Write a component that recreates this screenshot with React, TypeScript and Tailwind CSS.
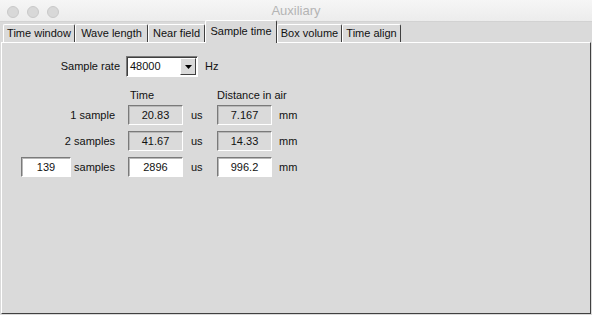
import React from "react";

const tabs = [
  { label: "Time window", w: "w-[72px]" },
  { label: "Wave length", w: "w-[73px]" },
  { label: "Near field", w: "w-[57px]" },
  { label: "Sample time", w: "w-[72px]", active: true },
  { label: "Box volume", w: "w-[65px]" },
  { label: "Time align", w: "w-[59px]" },
];

function Field({ value, editable }: { value: string; editable?: boolean }) {
  return (
    <div
      className={`flex h-[20px] items-center justify-center border border-t-[#7a7a7a] border-l-[#7a7a7a] border-r-white border-b-white shadow-[inset_1px_1px_0_#b8b8b8] ${
        editable ? "bg-white" : "bg-[#dadada]"
      }`}
    >
      {value}
    </div>
  );
}

function Row({
  label,
  time,
  dist,
  count,
}: {
  label: string;
  time: string;
  dist: string;
  count?: string;
}) {
  const editable = !!count;
  return (
    <div className="flex h-[20px] items-center">
      {count ? (
        <>
          <div className="ml-[19px] w-[50px]">
            <Field value={count} editable />
          </div>
          <div className="w-[44px] text-right">{label}</div>
        </>
      ) : (
        <div className="w-[113px] text-right">{label}</div>
      )}
      <div className="ml-[13px] w-[55px]">
        <Field value={time} editable={editable} />
      </div>
      <div className="w-[34px] pl-[8px]">us</div>
      <div className="w-[55px]">
        <Field value={dist} editable={editable} />
      </div>
      <div className="pl-[7px]">mm</div>
    </div>
  );
}

export default function App() {
  return (
    <div className="flex h-[315px] w-[592px] flex-col bg-[#dadada] font-['Liberation_Sans',Arial,sans-serif] text-[11px] text-[#111]">
      {/* title bar */}
      <div className="relative flex h-[22px] items-center justify-center border-b border-[#d2d2d2] bg-gradient-to-b from-[#f6f6f6] to-[#ececec]">
        <div className="absolute left-[7px] top-[6px] flex gap-[8px]">
          <span className="h-[12px] w-[12px] rounded-full border border-[#c9c9c9] bg-[#d8d8d8]" />
          <span className="h-[12px] w-[12px] rounded-full border border-[#c9c9c9] bg-[#d8d8d8]" />
          <span className="h-[12px] w-[12px] rounded-full border border-[#c9c9c9] bg-[#d8d8d8]" />
        </div>
        <span className="text-[13px] text-[#b4b4b4]">Auxiliary</span>
      </div>

      {/* tabs */}
      <div className="relative z-10 flex h-[20px] items-end pl-[3px]">
        {tabs.map((t) =>
          t.active ? (
            <div
              key={t.label}
              className={`${t.w} -mb-[1px] flex h-[23px] items-center justify-center rounded-t-[2px] border-l border-t border-r border-l-white border-t-white border-r-[#404040] bg-[#dadada] pb-[2px]`}
            >
              {t.label}
            </div>
          ) : (
            <div
              key={t.label}
              className={`${t.w} flex h-[18px] items-center justify-center rounded-t-[2px] border-l border-t border-r border-l-white border-t-white border-r-[#404040] bg-[#dadada]`}
            >
              {t.label}
            </div>
          )
        )}
      </div>

      {/* panel */}
      <div className="ml-[1px] mr-[1px] mb-[1px] flex flex-1 flex-col border border-t-white border-l-white border-r-[#404040] border-b-[#404040] pt-[13px]">
        <div className="flex h-[21px] items-center">
          <div className="w-[118px] text-right">Sample rate</div>
          <div className="ml-[6px] flex h-[21px] w-[72px] items-center border border-t-[#7a7a7a] border-l-[#7a7a7a] border-r-white border-b-white bg-white shadow-[inset_1px_1px_0_#404040]">
            <span className="flex-1 pl-[3px]">48000</span>
            <div className="mr-[1px] flex h-[17px] w-[16px] items-center justify-center border border-t-white border-l-white border-r-[#404040] border-b-[#404040] bg-[#dadada]">
              <svg width="7" height="4" viewBox="0 0 7 4">
                <path d="M0 0h7L3.5 4z" fill="#000" />
              </svg>
            </div>
          </div>
          <div className="ml-[7px]">Hz</div>
        </div>

        <div className="mt-[11px] flex h-[14px] items-center">
          <div className="ml-[128px] w-[87px]">Time</div>
          <div>Distance in air</div>
        </div>

        <div className="mt-[3px] flex flex-col gap-[6px]">
          <Row label="1 sample" time="20.83" dist="7.167" />
          <Row label="2 samples" time="41.67" dist="14.33" />
          <Row label="samples" time="2896" dist="996.2" count="139" />
        </div>
      </div>
    </div>
  );
}
